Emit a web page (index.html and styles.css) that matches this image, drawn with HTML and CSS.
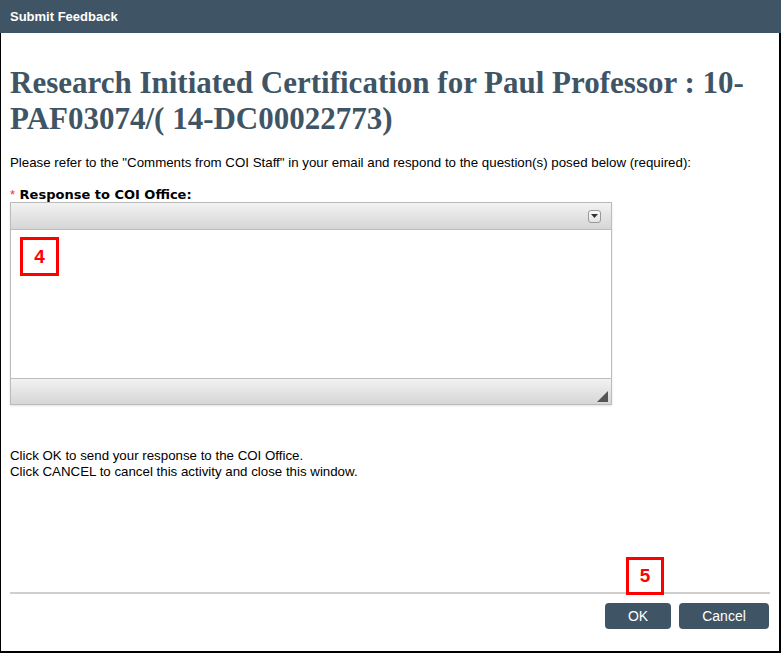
FILE: index.html
```html
<!DOCTYPE html>
<html lang="en">
<head>
  <meta charset="UTF-8" />
  <title>Submit Feedback</title>
  <link rel="stylesheet" href="styles.css">
</head>
<body>
  <div class="window">
    <div class="titlebar">Submit Feedback</div>
    <div class="content">
      <h1>Research Initiated Certification for Paul Professor : 10-PAF03074/( 14-DC00022773)</h1>
      <p class="intro">Please refer to the "Comments from COI Staff" in your email and respond to the question(s) posed below (required):</p>

      <label class="field-label"><span class="req">*</span> Response to COI Office:</label>
      <div class="editor">
        <div class="editor-toolbar">
          <span class="toolbar-btn">
            <svg width="7" height="4" viewBox="0 0 7 4"><path d="M0 0h7L3.5 4z" fill="#333"/></svg>
          </span>
        </div>
        <div class="editor-body">
          <span class="callout callout-4">4</span>
        </div>
        <div class="editor-status">
          <svg class="resize" width="11" height="11" viewBox="0 0 11 11"><path d="M11 0V11H0z" fill="#555"/></svg>
        </div>
      </div>

      <p class="note">Click OK to send your response to the COI Office.<br>Click CANCEL to cancel this activity and close this window.</p>
    </div>
    <div class="footer">
      <span class="callout callout-5">5</span>
      <button class="btn btn-ok">OK</button>
      <button class="btn btn-cancel">Cancel</button>
    </div>
  </div>
</body>
</html>
```

FILE: styles.css
```css
html, body {
  margin: 0;
  padding: 0;
  background: #fff;
}
.window {
  box-sizing: border-box;
  width: 781px;
  height: 653px;
  border-left: 1px solid #000;
  border-right: 2px solid #000;
  border-bottom: 2px solid #000;
  display: flex;
  flex-direction: column;
  font-family: Arial, "Liberation Sans", sans-serif;
  color: #000;
}
.titlebar {
  height: 33px;
  line-height: 33px;
  background-color: #3f5565;
  color: #fff;
  font-weight: bold;
  font-size: 13px;
  padding-left: 10px;
  margin-left: -1px;
  margin-right: -2px;
}
.content {
  flex: 1;
  padding: 0 9px;
}
h1 {
  font-family: "Liberation Serif", "Times New Roman", serif;
  font-weight: bold;
  font-size: 31px;
  line-height: 36px;
  color: #3f5565;
  margin: 32px 0 0 0;
  padding-right: 12px;
}
.intro {
  font-size: 13.3px;
  margin: 18px 0 0 0;
  line-height: 16px;
}
.field-label {
  display: block;
  margin-top: 17px;
  font-family: "DejaVu Sans", Verdana, sans-serif;
  font-weight: bold;
  font-size: 13px;
  line-height: 14px;
}
.req {
  color: #e33;
  font-weight: normal;
  font-family: Arial, "Liberation Sans", sans-serif;
}
.editor {
  width: 600px;
  border: 1px solid #bcbcbc;
  box-shadow: 0 1px 2px rgba(0,0,0,0.12);
}
.editor-toolbar,
.editor-status {
  height: 26px;
  background: linear-gradient(#f2f2f2, #d6d6d6);
  display: flex;
  justify-content: flex-end;
  align-items: center;
}
.editor-toolbar {
  border-bottom: 1px solid #bcbcbc;
  padding-right: 10px;
}
.toolbar-btn {
  width: 11px;
  height: 11px;
  border: 1px solid #999;
  border-radius: 3px;
  background: linear-gradient(#fafafa, #e4e4e4);
  display: flex;
  align-items: center;
  justify-content: center;
}
.editor-body {
  height: 148px;
  background: #fff;
  position: relative;
}
.editor-status {
  border-top: 1px solid #bcbcbc;
  align-items: flex-end;
  padding-right: 3px;
  padding-bottom: 2px;
  box-sizing: border-box;
}
.callout {
  position: absolute;
  box-sizing: border-box;
  border: 3px solid #f00;
  color: #f00;
  font-weight: bold;
  font-size: 19px;
  display: flex;
  align-items: center;
  justify-content: center;
  background: #fff;
}
.callout-4 {
  left: 9px;
  top: 7px;
  width: 39px;
  height: 39px;
}
.note {
  font-size: 13.3px;
  line-height: 16px;
  margin: 43px 0 0 0;
}
.footer {
  position: relative;
  margin: 0 9px 0 9px;
  border-top: 2px solid #cfcfcf;
  height: 59px;
  box-sizing: border-box;
  display: flex;
  justify-content: flex-end;
  align-items: flex-start;
  padding-top: 9px;
  gap: 8px;
  padding-right: 1px;
}
.callout-5 {
  left: 616px;
  top: -37px;
  width: 38px;
  height: 38px;
  background: transparent;
}
.btn {
  height: 26px;
  border: none;
  border-radius: 4px;
  background-color: #3f5565;
  color: #fff;
  font-family: Arial, "Liberation Sans", sans-serif;
  font-size: 14px;
  padding: 0;
  cursor: pointer;
}
.btn-ok {
  width: 66px;
}
.btn-cancel {
  width: 90px;
}
```
